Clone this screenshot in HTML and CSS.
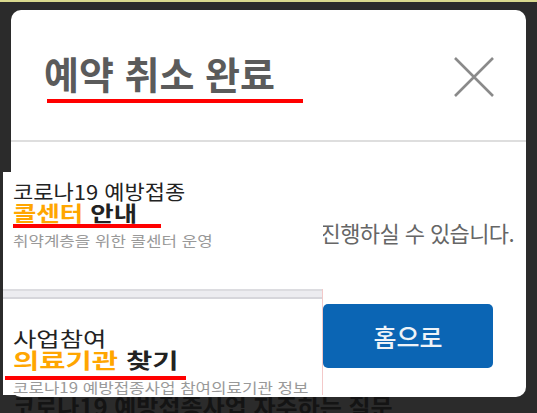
FILE: index.html
```html
<!DOCTYPE html>
<html lang="ko">
<head>
<meta charset="utf-8">
<link rel="stylesheet" href="styles.css">
</head>
<body>
<div class="topline"></div>
<div class="stage">
  <div class="modal">
    <div class="modal-head">
      <div class="title-wrap">
        <h1 class="title">예약 취소 완료</h1>
        <span class="title-line"></span>
      </div>
      <button class="close" aria-label="닫기">
        <svg width="40" height="42" viewBox="0 0 40 42"><path d="M1 2 L39 40 M39 2 L1 40" stroke="#8a8a8a" stroke-width="2.6" fill="none"/></svg>
      </button>
    </div>
    <div class="modal-body">
      <p class="msg">진행하실 수 있습니다.</p>
      <div class="actions"><a class="home">홈으로</a></div>
    </div>
  </div>
  <p class="under-text">코로나19 예방접종사업 자주하는 질문</p>

  <div class="banner banner-call">
    <p class="b-sub"><span class="sx sx-sub1">코로나19 예방접종</span></p>
    <p class="b-main"><span class="sx sx-main1"><span class="hl">콜센터</span> 안내</span></p>
    <span class="b-line"></span>
    <p class="b-desc"><span class="sx sx-desc">취약계층을 위한 콜센터 운영</span></p>
  </div>

  <div class="banner banner-find">
    <div class="b-strip"></div>
    <div class="b-inner">
      <p class="b-sub"><span class="sx sx-sub2">사업참여</span></p>
      <p class="b-main"><span class="sx sx-main2"><span class="hl">의료기관</span> 찾기</span></p>
      <span class="b-line b-line2"></span>
      <p class="b-desc b-desc2"><span class="sx sx-desc">코로나19 예방접종사업 참여의료기관 정보</span></p>
    </div>
  </div>
</div>
</body>
</html>
```
FILE: styles.css
```css
* { box-sizing: border-box; }
html, body { margin: 0; padding: 0; }
body {
  width: 537px;
  height: 413px;
  overflow: hidden;
  background: #2b2b2b;
  font-family: "Noto Sans CJK KR", "Noto Sans", sans-serif;
}
p, h1 { margin: 0; }
.topline { height: 2px; background: #d9d98e; }
.stage { position: relative; height: 411px; padding-top: 8px; }

.modal {
  position: relative;
  z-index: 1;
  margin-left: 11px;
  width: 515px;
  height: 387px;
  background: #fff;
  border-radius: 10px;
}
.modal-head {
  height: 132px;
  border-bottom: 2px solid #dedede;
  display: flex;
  justify-content: space-between;
  align-items: flex-start;
  padding: 41px 32px 0 33px;
}
.title-wrap { display: flex; flex-direction: column; }
.title {
  font-size: 38px;
  line-height: 44px;
  font-weight: 700;
  color: #5b5b5b;
}
.title-line {
  display: block;
  margin: 4px 0 0 3px;
  width: 256px;
  height: 4px;
  background: #ff0000;
}
.close {
  margin-top: 5px;
  padding: 0;
  border: 0;
  background: none;
  width: 40px;
  height: 42px;
}
.close svg { display: block; }

.modal-body {
  display: flex;
  flex-direction: column;
  align-items: flex-end;
  padding: 77px 12px 0 0;
}
.msg {
  font-size: 22px;
  line-height: 26px;
  color: #666;
  letter-spacing: -0.6px;
}
.actions { margin: 59px 21px 0 0; }
.home {
  display: flex;
  align-items: center;
  justify-content: center;
  width: 170px;
  height: 64px;
  border-radius: 5px;
  background: #0b65b4;
  color: #eef3f8;
  font-size: 25px;
  font-weight: 500;
}

.under-text {
  margin: -5px 0 0 13px;
  font-size: 24px;
  line-height: 28px;
  font-weight: 700;
  color: #141414;
  white-space: nowrap;
}

.banner {
  position: absolute;
  left: 3px;
  width: 320px;
  background: #fff;
  z-index: 2;
  overflow: hidden;
}
.banner-call {
  top: 170px;
  height: 117px;
  padding: 10px 10px 0 10px;
}
.banner-find {
  top: 287px;
  height: 106px;
  border-right: 1px solid #f3c9c9;
}
.b-strip {
  height: 10px;
  border-top: 2px solid #dcdce0;
  border-bottom: 2px solid #d6d6db;
  background: #ececf0;
}
.b-inner { padding: 30px 10px 0 10px; }

.sx {
  display: inline-block;
  transform-origin: left center;
  white-space: nowrap;
}
.b-sub {
  font-size: 20px;
  line-height: 20px;
  color: #222;
}
.b-main {
  font-size: 21px;
  line-height: 20px;
  font-weight: 700;
  color: #222;
}
.sx-sub1 { transform: scaleX(1.10); }
.sx-main1 { transform: scaleX(1.21); }
.sx-sub2 { transform: scaleX(1.27); }
.sx-main2 { transform: scaleX(1.36); }
.hl { color: #ffa600; }
.b-line {
  display: block;
  margin-top: 2px;
  width: 148px;
  height: 4px;
  background: #ff0000;
}
.b-line2 { margin: 7px 0 0 -8px; width: 181px; }
.b-desc {
  margin-top: 4px;
  font-size: 14px;
  line-height: 16px;
  color: #999;
}
.b-desc2 { margin-top: -1px; }
.sx-desc { transform: scaleX(1.2); }
```
